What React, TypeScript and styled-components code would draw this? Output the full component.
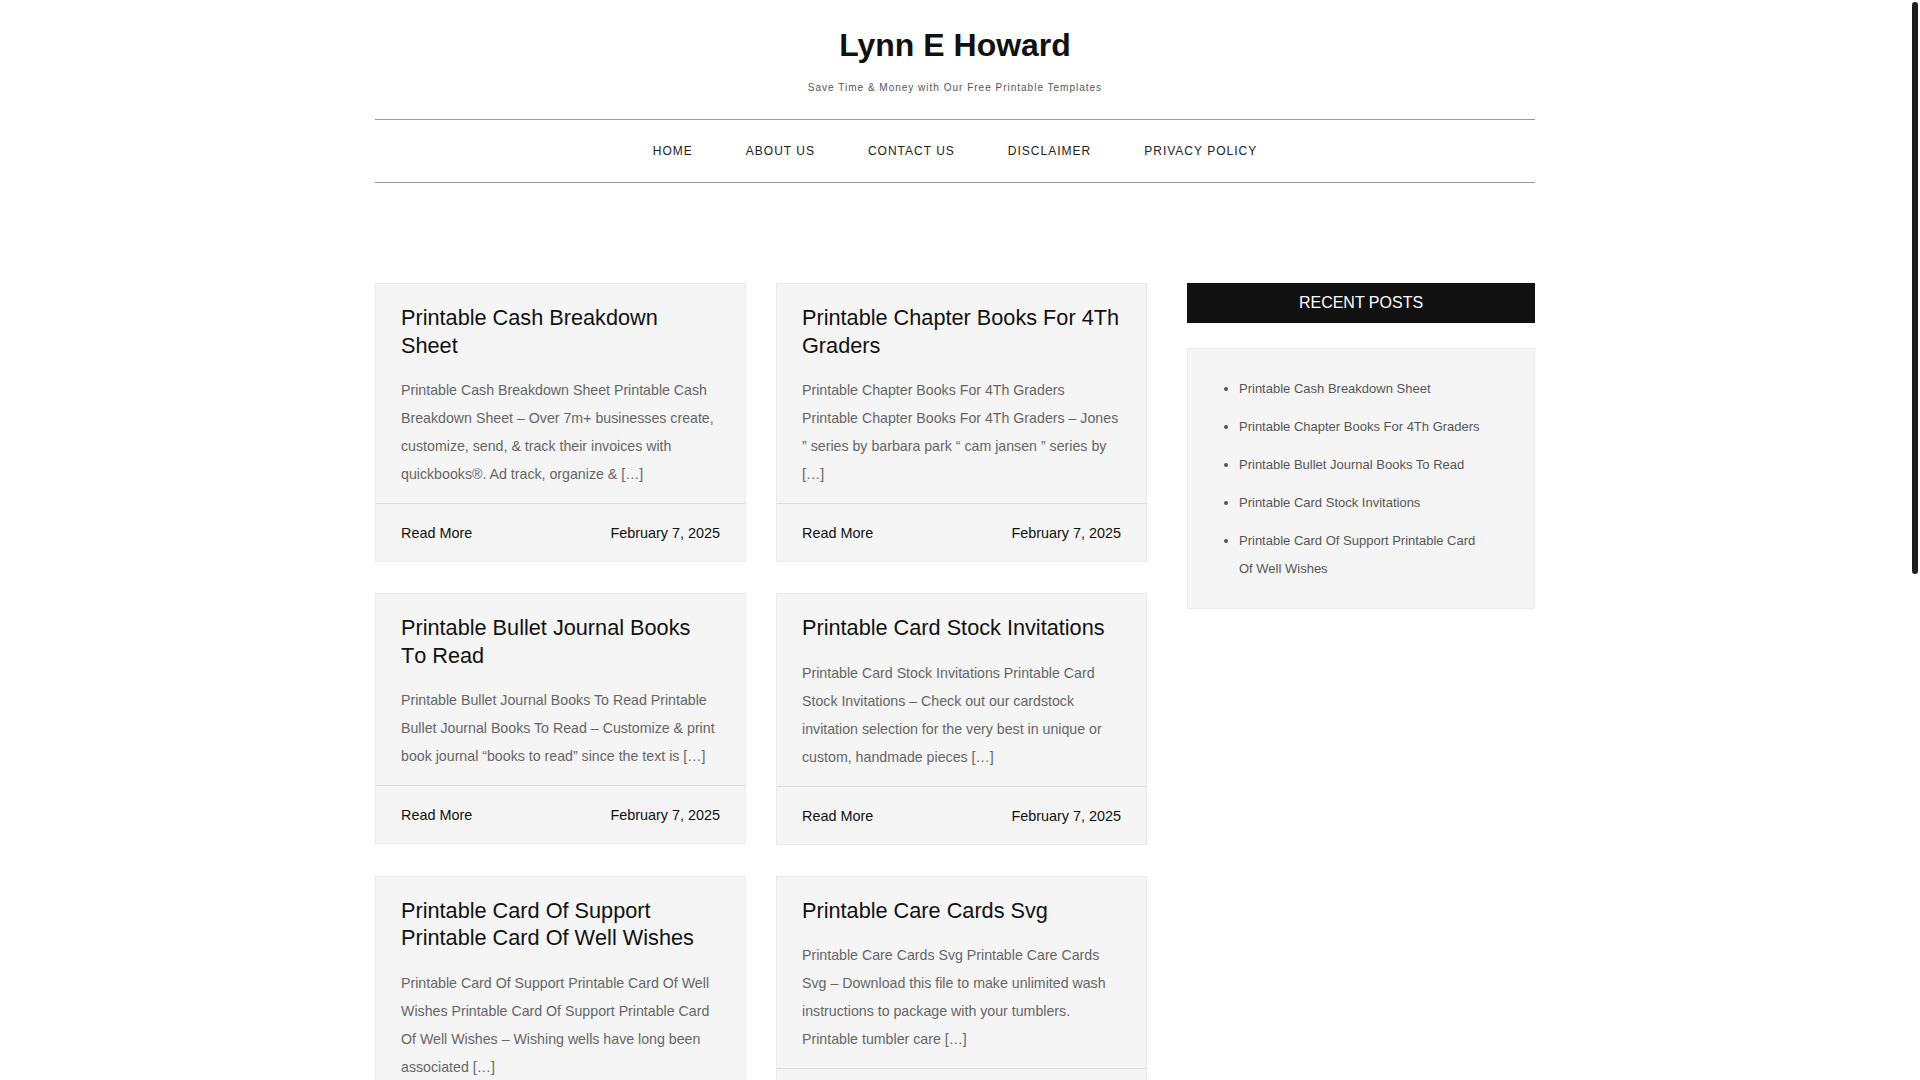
import React from 'react';
import styled, { createGlobalStyle } from 'styled-components';

type Post = {
  title: string;
  excerpt: string;
  date: string;
};

const posts: Post[] = [
  {
    title: 'Printable Cash Breakdown Sheet',
    excerpt:
      'Printable Cash Breakdown Sheet Printable Cash Breakdown Sheet – Over 7m+ businesses create, customize, send, & track their invoices with quickbooks®. Ad track, organize & […]',
    date: 'February 7, 2025',
  },
  {
    title: 'Printable Chapter Books For 4Th Graders',
    excerpt:
      'Printable Chapter Books For 4Th Graders Printable Chapter Books For 4Th Graders – Jones ” series by barbara park “ cam jansen ” series by […]',
    date: 'February 7, 2025',
  },
  {
    title: 'Printable Bullet Journal Books To Read',
    excerpt:
      'Printable Bullet Journal Books To Read Printable Bullet Journal Books To Read – Customize & print book journal “books to read” since the text is […]',
    date: 'February 7, 2025',
  },
  {
    title: 'Printable Card Stock Invitations',
    excerpt:
      'Printable Card Stock Invitations Printable Card Stock Invitations – Check out our cardstock invitation selection for the very best in unique or custom, handmade pieces […]',
    date: 'February 7, 2025',
  },
  {
    title: 'Printable Card Of Support Printable Card Of Well Wishes',
    excerpt:
      'Printable Card Of Support Printable Card Of Well Wishes Printable Card Of Support Printable Card Of Well Wishes – Wishing wells have long been associated […]',
    date: 'February 7, 2025',
  },
  {
    title: 'Printable Care Cards Svg',
    excerpt:
      'Printable Care Cards Svg Printable Care Cards Svg – Download this file to make unlimited wash instructions to package with your tumblers. Printable tumbler care […]',
    date: 'February 7, 2025',
  },
];

const menu = ['HOME', 'ABOUT US', 'CONTACT US', 'DISCLAIMER', 'PRIVACY POLICY'];

const GlobalStyle = createGlobalStyle`
  body {
    margin: 0;
    padding-right: 10px;
    background: #fff;
    font-family: "Liberation Sans", Arial, Helvetica, sans-serif;
    color: #111;
  }
  a {
    color: inherit;
    text-decoration: none;
  }
`;

const App: React.FC = () => {
  return (
    <>
      <GlobalStyle />
      <Container>
        <Header>
          <SiteTitle href="#">Lynn E Howard</SiteTitle>
          <Tagline>Save Time &amp; Money with Our Free Printable Templates</Tagline>
        </Header>
        <Nav>
          {menu.map((item) => (
            <NavItem key={item} href="#">
              {item}
            </NavItem>
          ))}
        </Nav>
        <Main>
          <Posts>
            {posts.map((post) => (
              <Card key={post.title}>
                <CardBody>
                  <CardTitle href="#">{post.title}</CardTitle>
                  <Excerpt>{post.excerpt}</Excerpt>
                </CardBody>
                <CardFooter>
                  <ReadMore href="#">Read More</ReadMore>
                  <PostDate>{post.date}</PostDate>
                </CardFooter>
              </Card>
            ))}
          </Posts>
          <Sidebar>
            <WidgetTitle>RECENT POSTS</WidgetTitle>
            <Widget>
              <RecentList>
                {posts.slice(0, 5).map((post) => (
                  <RecentItem key={post.title}>
                    <a href="#">{post.title}</a>
                  </RecentItem>
                ))}
              </RecentList>
            </Widget>
          </Sidebar>
        </Main>
      </Container>
      <ScrollTrack>
        <ScrollThumb />
      </ScrollTrack>
    </>
  );
};

const Container = styled.div`
  width: 1160px;
  margin: 0 auto;
`;

const Header = styled.header`
  display: flex;
  flex-direction: column;
  align-items: center;
  padding-top: 26px;
`;

const SiteTitle = styled.a`
  font-size: 32px;
  font-weight: 700;
  line-height: 38px;
  color: #111;
`;

const Tagline = styled.div`
  margin-top: 17px;
  font-size: 10px;
  line-height: 14px;
  letter-spacing: 1px;
  color: #555;
`;

const Nav = styled.nav`
  margin-top: 24px;
  height: 62px;
  border-top: 1px solid #999;
  border-bottom: 1px solid #999;
  display: flex;
  justify-content: center;
  align-items: center;
`;

const NavItem = styled.a`
  padding: 0 26.5px;
  font-size: 12px;
  letter-spacing: 1px;
  color: #222;
`;

const Main = styled.main`
  margin-top: 100px;
  display: grid;
  grid-template-columns: 772px 348px;
  column-gap: 40px;
  align-items: start;
`;

const Posts = styled.div`
  display: grid;
  grid-template-columns: 1fr 1fr;
  column-gap: 30px;
  row-gap: 31px;
  align-items: start;
`;

const Card = styled.article`
  background: #f5f5f5;
  border: 1px solid #ebebeb;
`;

const CardBody = styled.div`
  padding: 20px 25px 15px;
`;

const CardTitle = styled.a`
  display: block;
  margin: 0 1px 17px 0;
  font-size: 21.7px;
  line-height: 27.5px;
  font-kerning: none;
  color: #111;
`;

const Excerpt = styled.p`
  margin: 0;
  font-size: 14.2px;
  line-height: 28px;
  color: #666;
`;

const CardFooter = styled.div`
  border-top: 1px solid #dcdcdc;
  padding: 19px 25px 18px;
  display: flex;
  justify-content: space-between;
  align-items: center;
  font-size: 14.4px;
  line-height: 20px;
`;

const ReadMore = styled.a`
  color: #111;
`;

const PostDate = styled.span`
  color: #111;
`;

const Sidebar = styled.aside`
  display: flex;
  flex-direction: column;
`;

const WidgetTitle = styled.h3`
  margin: 0 0 25px;
  height: 40px;
  background: #111;
  color: #fff;
  font-size: 16px;
  font-weight: 400;
  line-height: 40px;
  text-align: center;
`;

const Widget = styled.div`
  background: #f5f5f5;
  border: 1px solid #ebebeb;
  padding: 26px 25px 25px;
`;

const RecentList = styled.ul`
  margin: 0;
  padding: 0 26px;
  color: #555;
`;

const RecentItem = styled.li`
  font-size: 13px;
  line-height: 28px;
  margin-bottom: 10px;
  &:last-child {
    margin-bottom: 0;
  }
`;

const ScrollTrack = styled.div`
  position: fixed;
  top: 0;
  right: 0;
  width: 10px;
  height: 100vh;
  background: #fff;
`;

const ScrollThumb = styled.div`
  margin: 2px 2px 0;
  height: 572px;
  border-radius: 3px;
  background: #1e1e1e;
`;

export default App;
